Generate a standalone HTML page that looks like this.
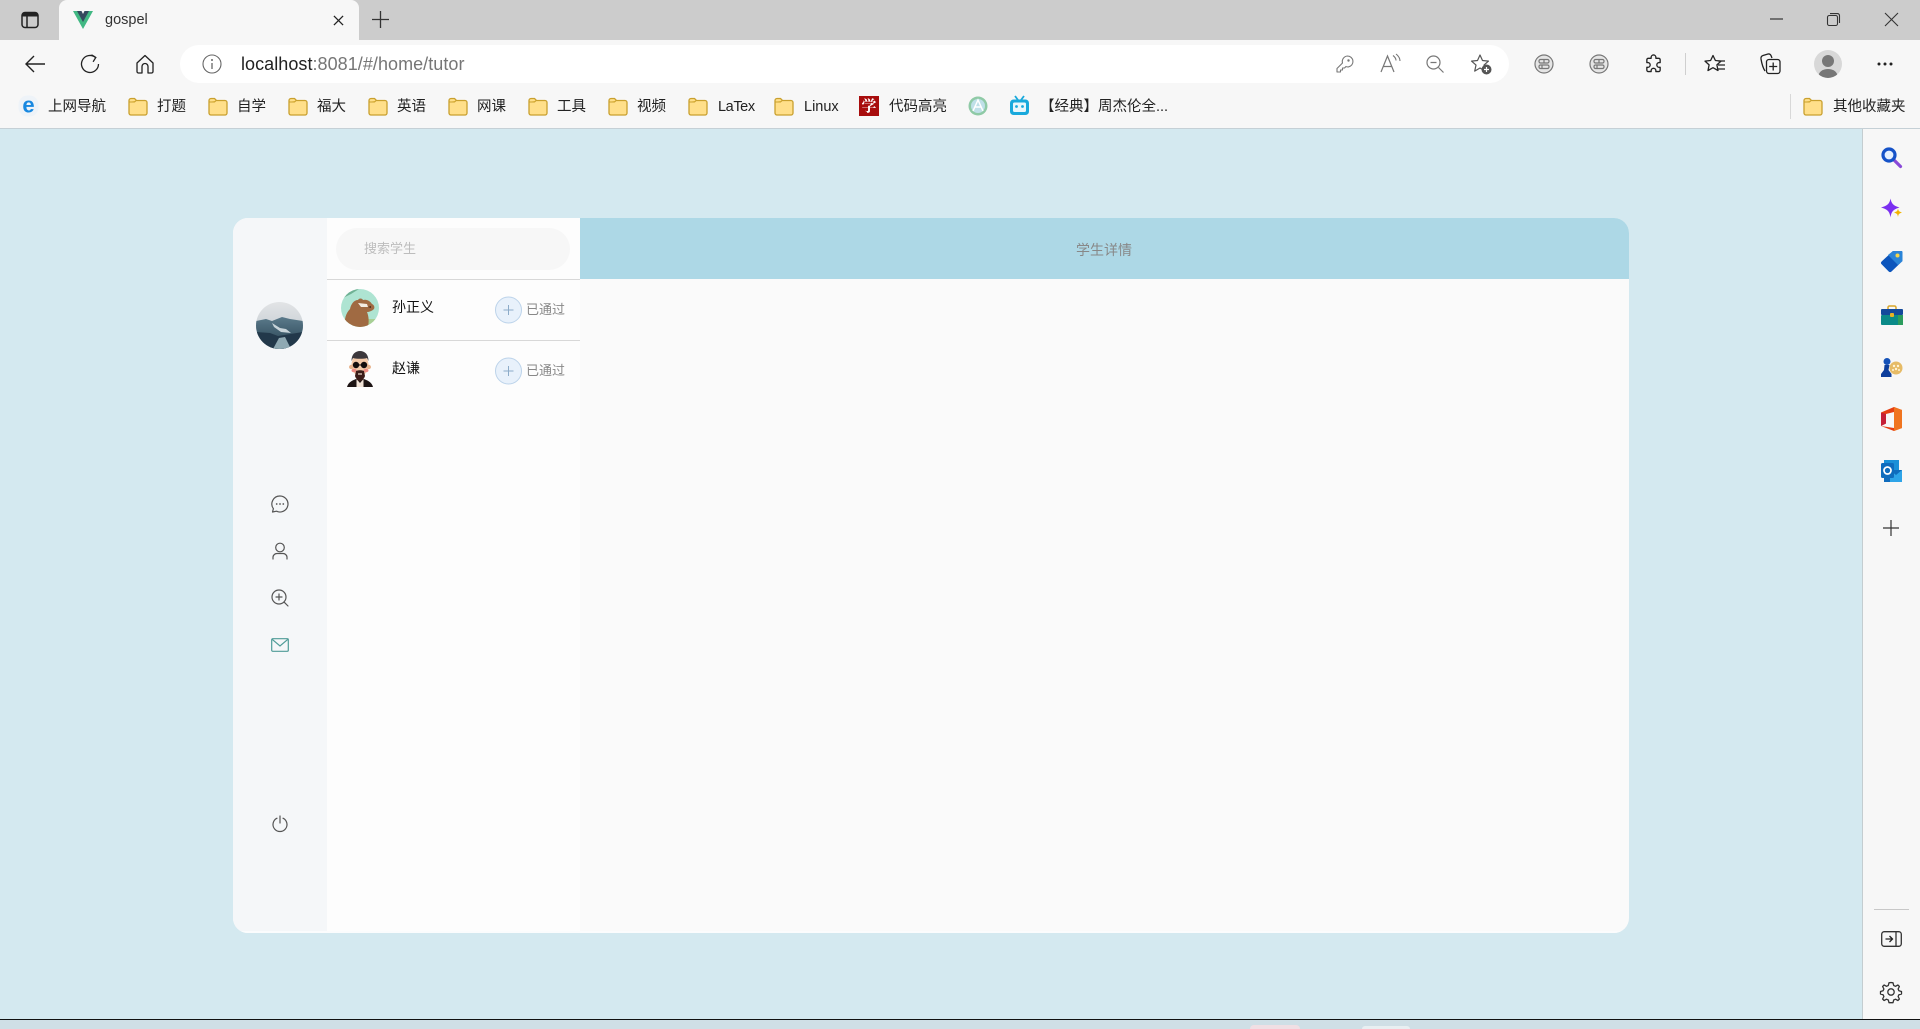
<!DOCTYPE html>
<html lang="zh">
<head>
<meta charset="utf-8">
<title>gospel</title>
<style>
html,body{margin:0;padding:0;width:1920px;height:1029px;overflow:hidden;background:#d4e9f0;font-family:"Liberation Sans","Noto Sans CJK SC",sans-serif}
div,span,svg{position:absolute;display:block}
svg{overflow:visible}
svg *{position:static}
.t{white-space:nowrap;transform:translateY(-50%);line-height:20px}
.bm{font-size:14.5px;color:#222;top:106.5px}
.ic{fill:none;stroke:#333;stroke-width:1.3;stroke-linecap:round;stroke-linejoin:round}
.nv{fill:none;stroke:#555;stroke-width:1.2;stroke-linecap:round;stroke-linejoin:round}
</style>
</head>
<body>
<svg width="0" height="0" style="left:0;top:0">
<defs>
<symbol id="folder" viewBox="0 0 20 20">
<path d="M1 4.500a2 2 0 0 1 2-2h3.500l2 2h8.500a2 2 0 0 1 2 2v10.500a2 2 0 0 1-2 2H3a2 2 0 0 1-2-2z" fill="#ffdf8a" stroke="#c9a02e" stroke-width="1.300"/>
<path d="M1.500 6h5l1.700-1.500" fill="#f3c84f" stroke="#c9a02e" stroke-width="1"/>
</symbol>
<symbol id="bt" viewBox="0 0 20 20">
<circle cx="10" cy="10" r="9" fill="#e5e5e5" stroke="#777" stroke-width="1.200"/>
<rect x="5" y="5.500" width="10" height="3.500" rx="1.500" fill="none" stroke="#777" stroke-width="1.200"/>
<rect x="5" y="11" width="10" height="3.500" rx="1.500" fill="none" stroke="#777" stroke-width="1.200"/>
<path d="M10 5.500v3.500M8 11v3.500" stroke="#777" stroke-width="1.200"/>
</symbol>
<symbol id="plus" viewBox="0 0 27 28">
<circle cx="13.500" cy="14" r="13" fill="#e8f1fb" stroke="#bcd3ea" stroke-width="1"/>
<path d="M13.500 9v10M8.500 14h10" stroke="#8cabc8" stroke-width="1" fill="none"/>
</symbol>
</defs>
</svg>

<!-- tab strip -->
<div style="left:0;top:0;width:1920px;height:40px;background:#cccccc"></div>
<svg style="left:21px;top:11px" width="18" height="18" viewBox="0 0 18 18"><rect x="1" y="1.500" width="16" height="15" rx="3" fill="none" stroke="#222" stroke-width="1.500"/><path d="M1 3.500a2 2 0 0 1 2-2h12a2 2 0 0 1 2 2v2H1z" fill="#222"/><path d="M6 5v11" stroke="#222" stroke-width="1.500"/></svg>
<div style="left:59px;top:0;width:300px;height:40px;background:#f7f7f7;border-radius:8px 8px 0 0"></div>
<svg style="left:73px;top:11px" width="20" height="18" viewBox="0 0 20 18"><path d="M0 0h5l5 9 5-9h5L10 18z" fill="#41b883"/><path d="M4 0h4.500L10 3l1.500-3H16L10 11z" fill="#35495e"/></svg>
<span class="t" style="left:105px;top:20px;font-size:14.500px;color:#333">gospel</span>
<svg style="left:333px;top:15px" width="11" height="11" viewBox="0 0 12 12"><path d="M1 1l10 10M11 1L1 11" stroke="#222" stroke-width="1.400" fill="none"/></svg>
<svg style="left:372px;top:11px" width="17" height="17" viewBox="0 0 17 17"><path d="M8.500 0v17M0 8.500h17" stroke="#333" stroke-width="1.300" fill="none"/></svg>
<svg style="left:1770px;top:18px" width="13" height="2" viewBox="0 0 13 2"><path d="M0 1h13" stroke="#333" stroke-width="1.200"/></svg>
<svg style="left:1827px;top:13px" width="13" height="13" viewBox="0 0 13 13"><rect x="0.500" y="2.500" width="10" height="10" rx="1.800" fill="none" stroke="#333" stroke-width="1.100"/><path d="M3 .6h7.500A2 2 0 0 1 12.500 2.600V10" fill="none" stroke="#333" stroke-width="1.100"/></svg>
<svg style="left:1885px;top:13px" width="13" height="13" viewBox="0 0 13 13"><path d="M0 0l13 13M13 0L0 13" stroke="#333" stroke-width="1.100" fill="none"/></svg>

<!-- toolbar -->
<div style="left:0;top:40px;width:1920px;height:88px;background:#f7f7f7"></div>
<div style="left:0;top:128px;width:1920px;height:1px;background:#c5d0d6"></div>
<svg style="left:24px;top:53px" width="22" height="22" viewBox="0 0 22 22"><path d="M21 11H2M10 3l-8 8 8 8" fill="none" stroke="#222" stroke-width="1.400"/></svg>
<svg style="left:80px;top:54px" width="20" height="20" viewBox="0 0 20 20"><path d="M15.500 3.500A8.500 8.500 0 1 0 18.500 10" fill="none" stroke="#222" stroke-width="1.300"/><path d="M11.500 0.800l4.300 2.700-2.700 4.300" fill="none" stroke="#222" stroke-width="1.300"/></svg>
<svg style="left:135px;top:54px" width="20" height="20" viewBox="0 0 20 20"><path d="M2 9l8-7.500L18 9v8.500a1.500 1.500 0 0 1-1.500 1.500H13V12.500a3 3 0 0 0-6 0V19H3.500A1.500 1.500 0 0 1 2 17.500z" fill="none" stroke="#222" stroke-width="1.300" stroke-linejoin="round"/></svg>
<div style="left:180px;top:45px;width:1329px;height:38px;background:#fff;border-radius:19px"></div>
<svg style="left:202px;top:54px" width="20" height="20" viewBox="0 0 20 20"><circle cx="10" cy="10" r="9" fill="none" stroke="#666" stroke-width="1.100"/><path d="M10 9v6" stroke="#666" stroke-width="1.300"/><circle cx="10" cy="6" r="1" fill="#666"/></svg>
<span class="t" style="left:241px;top:63.500px;font-size:18px;letter-spacing:.05px;color:#222">localhost<span style="position:static;display:inline;color:#767676">:8081/#/home/tutor</span></span>

<svg style="left:1336px;top:55px" width="18" height="18" viewBox="0 0 18 18"><path d="M11.500 1a5.500 5.500 0 0 1 1 10.900c-1 .1-2 0-2.500-.4L8.500 13H6.500v2H4.500v2H1v-3.500L6.500 8A5.500 5.500 0 0 1 11.500 1z" fill="none" stroke="#777" stroke-width="1.100" stroke-linejoin="round"/><circle cx="12.500" cy="5.500" r="1.200" fill="#777"/></svg>
<svg style="left:1380px;top:54px" width="21" height="19" viewBox="0 0 21 19"><path d="M1 18L7.500 2 14 18M3.500 12.500h8" fill="none" stroke="#777" stroke-width="1.200"/><path d="M13 1.500c2 1.500 3 3 3 5M16 0c2.500 2 4 4.500 4 7" fill="none" stroke="#777" stroke-width="1.100"/></svg>
<svg style="left:1426px;top:55px" width="18" height="18" viewBox="0 0 18 18"><circle cx="7.500" cy="7.500" r="6.500" fill="none" stroke="#777" stroke-width="1.200"/><path d="M12.500 12.500l5 5M4.500 7.500h6" stroke="#777" stroke-width="1.200" fill="none"/></svg>
<svg style="left:1470px;top:53px" width="22" height="22" viewBox="0 0 22 22"><path d="M10 2l2.500 5.500 6 .6-4.500 4 1.300 6-5.300-3.100-5.300 3.100 1.300-6-4.500-4 6-.6z" fill="none" stroke="#555" stroke-width="1.200" stroke-linejoin="round"/><circle cx="16.500" cy="16.500" r="5" fill="#555"/><path d="M16.500 14v5M14 16.500h5" stroke="#fff" stroke-width="1.200"/></svg>
<svg style="left:1534px;top:54px" width="20" height="20"><use href="#bt"/></svg>
<svg style="left:1589px;top:54px" width="20" height="20"><use href="#bt"/></svg>
<svg style="left:1644px;top:54px" width="20" height="20" viewBox="0 0 20 20"><path d="M7.500 4V3a2.500 2.500 0 0 1 5 0v1h3a1.500 1.500 0 0 1 1.500 1.500v3h-1a2.500 2.500 0 0 0 0 5h1v3a1.500 1.500 0 0 1-1.500 1.500h-3v-1a2.500 2.500 0 0 0-5 0v1h-3A1.500 1.500 0 0 1 3 16.500v-3h1a2.500 2.500 0 0 0 0-5H3v-3A1.500 1.500 0 0 1 4.500 4z" transform="translate(0 .5) scale(.95)" fill="none" stroke="#222" stroke-width="1.400" stroke-linejoin="round"/></svg>
<div style="left:1685px;top:53px;width:1px;height:22px;background:#cfcfcf"></div>
<svg style="left:1704px;top:54px" width="22" height="20" viewBox="0 0 22 20"><path d="M9 1.500l2.400 5 5.600.6-4.100 3.800 1.100 5.600L9 13.700 4 16.500l1.100-5.600L1 7.100l5.600-.6z" fill="none" stroke="#222" stroke-width="1.300" stroke-linejoin="round"/><path d="M14 7h7M14 11h7M14 15h7" stroke="#222" stroke-width="1.300"/></svg>
<svg style="left:1760px;top:53px" width="21" height="22" viewBox="0 0 21 22"><path d="M5 18C3 15 1.500 9 1 6c-.2-1.500.5-3 2-3.500L8 1c1.500-.3 2.500.5 3 1.500L12 5" fill="none" stroke="#222" stroke-width="1.300"/><rect x="6.500" y="6.500" width="13.500" height="14" rx="2.500" fill="none" stroke="#222" stroke-width="1.300"/><path d="M13.200 9.500v8M9.200 13.500h8" stroke="#222" stroke-width="1.300"/></svg>
<svg style="left:1814px;top:50px" width="28" height="28" viewBox="0 0 28 28"><defs><clipPath id="pc"><circle cx="14" cy="14" r="14"/></clipPath></defs><circle cx="14" cy="14" r="14" fill="#d8d8d8"/><g clip-path="url(#pc)"><circle cx="14" cy="11" r="6" fill="#777"/><ellipse cx="14" cy="26" rx="9.500" ry="7" fill="#777"/></g></svg>
<svg style="left:1877px;top:62px" width="16" height="4" viewBox="0 0 16 4"><circle cx="2" cy="2" r="1.500" fill="#222"/><circle cx="8" cy="2" r="1.500" fill="#222"/><circle cx="14" cy="2" r="1.500" fill="#222"/></svg>

<!-- bookmarks -->
<svg style="left:18px;top:95px" width="21" height="22" viewBox="0 0 21 22"><rect x=".5" y=".5" width="20" height="21" rx="9" fill="#eef3f8"/><text x="10.500" y="17.500" text-anchor="middle" font-family="Liberation Sans" font-weight="bold" font-size="22" fill="#1888e0">e</text></svg>
<span class="t bm" style="left:48px">上网导航</span>
<svg style="left:128px;top:96px" width="20" height="20"><use href="#folder"/></svg><span class="t bm" style="left:157px">打题</span>
<svg style="left:208px;top:96px" width="20" height="20"><use href="#folder"/></svg><span class="t bm" style="left:237px">自学</span>
<svg style="left:288px;top:96px" width="20" height="20"><use href="#folder"/></svg><span class="t bm" style="left:317px">福大</span>
<svg style="left:368px;top:96px" width="20" height="20"><use href="#folder"/></svg><span class="t bm" style="left:397px">英语</span>
<svg style="left:448px;top:96px" width="20" height="20"><use href="#folder"/></svg><span class="t bm" style="left:477px">网课</span>
<svg style="left:528px;top:96px" width="20" height="20"><use href="#folder"/></svg><span class="t bm" style="left:557px">工具</span>
<svg style="left:608px;top:96px" width="20" height="20"><use href="#folder"/></svg><span class="t bm" style="left:637px">视频</span>
<svg style="left:688px;top:96px" width="20" height="20"><use href="#folder"/></svg><span class="t bm" style="left:718px;letter-spacing:-.4px">LaTex</span>
<svg style="left:774px;top:96px" width="20" height="20"><use href="#folder"/></svg><span class="t bm" style="left:804px">Linux</span>
<div style="left:859px;top:96px;width:20px;height:20px;background:#a80d0d;color:#fff;font-size:15px;line-height:20px;text-align:center;font-family:'Noto Serif CJK SC',serif;font-weight:bold">学</div>
<span class="t bm" style="left:889px">代码高亮</span>
<svg style="left:968px;top:96px" width="20" height="20" viewBox="0 0 20 20"><circle cx="10" cy="10" r="9.500" fill="#8fcaa6"/><circle cx="10" cy="10" r="7" fill="#bfe0e8"/><path d="M5 15L10 4l5 11M7 11h6" fill="none" stroke="#fff" stroke-width="1.500"/></svg>
<svg style="left:1009px;top:95px" width="21" height="21" viewBox="0 0 21 21"><path d="M6 1l3 4M15 1l-3 4" stroke="#19a9dc" stroke-width="1.800" fill="none"/><rect x="1" y="4.500" width="19" height="15.500" rx="3.500" fill="#19a9dc"/><rect x="4" y="7.500" width="13" height="9.500" rx="1.500" fill="#e9f7fc"/><circle cx="7.500" cy="11.500" r="1.400" fill="#19a9dc"/><circle cx="13.500" cy="11.500" r="1.400" fill="#19a9dc"/></svg>
<span class="t bm" style="left:1040px">【经典】周杰伦全...</span>
<div style="left:1790px;top:94px;width:1px;height:25px;background:#d8d8d8"></div>
<svg style="left:1803px;top:96px" width="20" height="20"><use href="#folder"/></svg><span class="t bm" style="left:1833px">其他收藏夹</span>

<!-- side panel -->
<div style="left:1862px;top:129px;width:58px;height:890px;background:#f7f7f7;border-left:1px solid #c4cdd0;box-sizing:border-box"></div>
<svg style="left:1881px;top:147px" width="21" height="21" viewBox="0 0 21 21"><path d="M13 13l6.500 6.500" stroke="#8a4ad8" stroke-width="3.200" stroke-linecap="round"/><circle cx="8" cy="8" r="6" fill="#e5f0ff" stroke="#1552c8" stroke-width="3.200"/></svg>
<svg style="left:1881px;top:198px" width="22" height="23" viewBox="0 0 22 22"><path d="M9.500 0c1 5 2.500 7 9 9-6.500 2-8 4-9 10-1-6-2.500-8-9.500-10 7-2 8.500-4 9.500-9z" fill="#7a2ff0"/><path d="M17 10c.5 2.500 1 3 4 4-3 1-3.500 1.500-4 4.500-.5-3-1-3.500-4-4.500 3-1 3.500-1.500 4-4z" fill="#f4b400"/></svg>
<svg style="left:1881px;top:250px" width="22" height="22" viewBox="0 0 22 22"><path d="M12 1h8a1.500 1.500 0 0 1 1.500 1.500V11L10.500 21.500a2 2 0 0 1-2.800 0L.6 14.300a2 2 0 0 1 0-2.800z" fill="#0c55bc"/><path d="M12 1h8a1.500 1.500 0 0 1 1.500 1.500V11L17 15 7 5z" fill="#2a84d8"/><circle cx="16.500" cy="5.500" r="2" fill="#f5d54a"/></svg>
<svg style="left:1881px;top:305px" width="22" height="20" viewBox="0 0 22 20"><path d="M7 5V2.500A1.500 1.500 0 0 1 8.500 1h5A1.500 1.500 0 0 1 15 2.500V5" fill="none" stroke="#d9a62a" stroke-width="1.500"/><rect x="0" y="4" width="22" height="6" rx="1" fill="#134a9b"/><rect x="0" y="10" width="22" height="10" rx="1" fill="#0a8a88"/><rect x="17" y="10" width="5" height="10" fill="#2b9c5d"/><rect x="9" y="8" width="4" height="4" rx="1" fill="#e6b325"/></svg>
<svg style="left:1880px;top:357px" width="23" height="21" viewBox="0 0 23 21"><circle cx="7" cy="4.500" r="3.500" fill="#1552b8"/><path d="M4.500 8h5l-1 5 3 4v3H1v-3l3-4z" fill="#0d3e9c"/><circle cx="16" cy="11" r="6.500" fill="#e6bb66"/><g fill="#fff4d6"><circle cx="14" cy="9" r="1.200"/><circle cx="18" cy="9" r="1.200"/><circle cx="16" cy="12" r="1.200"/><circle cx="13" cy="13" r="1"/><circle cx="19" cy="13" r="1"/></g></svg>
<svg style="left:1881px;top:407px" width="21" height="24" viewBox="0 0 21 24"><path d="M0 5.500L13 0l8 3v18l-8 3L0 19l13 2V5l-8 2v9.500L0 19z" fill="#e63f12"/><path d="M13 0l8 3v18l-8 3z" fill="#f0741f"/><path d="M0 5.500L5 7v9.500L0 19z" fill="#c52038"/></svg>
<svg style="left:1881px;top:460px" width="21" height="22" viewBox="0 0 21 22"><rect x="3" y="0" width="15" height="12" fill="#1a90d8"/><rect x="3" y="10" width="18" height="12" fill="#0f6cbd"/><path d="M9 10l6 5 6-5v12H9z" fill="#2ea4e8"/><rect x="0" y="3" width="13" height="15" rx="1.500" fill="#0f6cbd"/><circle cx="6.500" cy="10.500" r="3.500" fill="none" stroke="#fff" stroke-width="1.700"/></svg>
<svg style="left:1883px;top:520px" width="16" height="16" viewBox="0 0 16 16"><path d="M8 0v16M0 8h16" stroke="#333" stroke-width="1.200" fill="none"/></svg>
<div style="left:1874px;top:909px;width:35px;height:1px;background:#c8c8c8"></div>
<svg style="left:1881px;top:931px" width="21" height="16" viewBox="0 0 21 16"><rect x=".7" y=".7" width="19.600" height="14.600" rx="2.500" fill="none" stroke="#333" stroke-width="1.300"/><path d="M15 .7v14.600" stroke="#333" stroke-width="1.300"/><path d="M4.500 8h7M8.500 5l3 3-3 3" fill="none" stroke="#222" stroke-width="1.300"/></svg>
<svg style="left:1879px;top:980px" width="24" height="24" viewBox="0 0 24 24"><path d="M12 2.500l2 .3.700 2.700 1.800.8 2.400-1.300 1.500 1.500-1.300 2.500.8 1.700 2.600.8v2.500l-2.600.8-.8 1.700 1.300 2.500-1.500 1.500-2.400-1.300-1.800.8-.7 2.700h-4l-.7-2.700-1.800-.8-2.400 1.300-1.500-1.500 1.300-2.500-.8-1.700-2.600-.8v-2.500l2.600-.8.800-1.700-1.300-2.500 1.500-1.500 2.400 1.300 1.800-.8.700-2.700z" fill="none" stroke="#333" stroke-width="1.300" stroke-linejoin="round"/><circle cx="12" cy="12" r="3.200" fill="none" stroke="#333" stroke-width="1.300"/></svg>

<!-- taskbar -->
<div style="left:0;top:1019px;width:1920px;height:1px;background:#111"></div>
<div style="left:0;top:1020px;width:1920px;height:9px;background:#cfdfe6"></div>
<div style="left:1250px;top:1025px;width:50px;height:4px;background:#f0dfe4;border-radius:4px 4px 0 0"></div>
<div style="left:1362px;top:1026px;width:48px;height:3px;background:#e8eff2;border-radius:4px 4px 0 0"></div>

<!-- app card -->
<div style="left:233px;top:218px;width:1396px;height:715px;border-radius:15px;overflow:hidden;background:#fafafa">
  <div style="left:0;top:0;width:94px;height:715px;background:#f5f7f9"></div>
  <div style="left:94px;top:0;width:253px;height:715px;background:#fdfdfd"></div>
  <div style="left:347px;top:0;width:1049px;height:61px;background:#add8e6"></div>
  <div style="left:94px;top:61px;width:253px;height:1px;background:#d8d8d8"></div>
  <div style="left:94px;top:122px;width:253px;height:1px;background:#d8d8d8"></div>
  <div style="left:103px;top:10px;width:234px;height:42px;background:#f7f7f7;border-radius:21px"></div>
  <div style="left:0;top:713px;width:1396px;height:2px;background:#fbfcfd"></div>
</div>
<span class="t" style="left:364px;top:249px;font-size:13px;color:#bdbdbd">搜索学生</span>
<span class="t" style="left:1076px;top:250px;font-size:14px;color:#888">学生详情</span>

<!-- profile avatar -->
<svg style="left:256px;top:302px" width="47" height="47" viewBox="0 0 47 47"><defs><clipPath id="a0"><circle cx="23.500" cy="23.500" r="23.500"/></clipPath><linearGradient id="sky" x1="0" y1="0" x2="0" y2="1"><stop offset="0" stop-color="#e2e4e6"/><stop offset="1" stop-color="#b8c2ca"/></linearGradient><linearGradient id="mt" x1="0" y1="0" x2="0" y2="1"><stop offset="0" stop-color="#5b7a8b"/><stop offset="1" stop-color="#25404f"/></linearGradient></defs><g clip-path="url(#a0)"><rect width="47" height="47" fill="url(#sky)"/><path d="M0 19l10-2 6 2 10-4 8 2 13 2v28H0z" fill="url(#mt)"/><path d="M16 21l8 5 6 1 5 4-10-1-7-5z" fill="#c8d4da"/><path d="M0 30l14 1 8 3 25-4v17H0z" fill="#22384a"/><path d="M17 47l6-11 6-1 6 12z" fill="#8fa9b3"/></g></svg>

<!-- nav icons -->
<svg style="left:271px;top:495px" width="18" height="18" viewBox="0 0 18 18"><path d="M9 1a8 8 0 1 1-3.500 15.200L1.500 17l.9-3.300A8 8 0 0 1 9 1z" class="nv"/><circle cx="5.700" cy="9" r=".9" fill="#555"/><circle cx="9" cy="9" r=".9" fill="#555"/><circle cx="12.300" cy="9" r=".9" fill="#555"/></svg>
<svg style="left:272px;top:542px" width="16" height="18" viewBox="0 0 16 18"><circle cx="8" cy="5.500" r="4.300" class="nv"/><path d="M1 17v-2a4 4 0 0 1 4-3.500h6a4 4 0 0 1 4 3.500v2" class="nv"/></svg>
<svg style="left:271px;top:589px" width="18" height="18" viewBox="0 0 18 18"><circle cx="8" cy="8" r="7" class="nv"/><path d="M5 8h6M8 5v6M13.200 13.200L17 17" class="nv"/></svg>
<svg style="left:271px;top:638px" width="18" height="14" viewBox="0 0 18 14"><rect x=".7" y=".7" width="16.600" height="12.600" rx="1" fill="none" stroke="#4f9c98" stroke-width="1.200"/><path d="M1 1.200L9 8l8-6.800" fill="none" stroke="#4f9c98" stroke-width="1.200"/></svg>
<svg style="left:272px;top:815px" width="16" height="17" viewBox="0 0 16 17"><path d="M5 3.200a7 7 0 1 0 6 0" class="nv"/><path d="M8 1v7" class="nv"/></svg>

<!-- bear avatar -->
<svg style="left:341px;top:289px" width="38" height="38" viewBox="0 0 38 38"><defs><clipPath id="a1"><circle cx="19" cy="19" r="19"/></clipPath></defs><g clip-path="url(#a1)"><rect width="38" height="38" fill="#aee4d2"/><path d="M0 0h18L10 5 0 10z" fill="#6fb194"/><path d="M0 30h38v8H0z" fill="#a8cf94"/><path d="M4 38c-1-8 1-14 5-18 1-5 4-9 8-9 1-2 4-2 5 0 4-1 7 1 9 4 2 1 3 3 2 5-2 2-5 3-7 3 2 5 2 10 1 15z" fill="#a06a42"/><path d="M17 14l9 1 1 3-7 0z" fill="#f3ece2"/><path d="M27 18l3-1 0 2z" fill="#4a2e1c"/></g></svg>
<!-- man avatar -->
<svg style="left:347px;top:351px" width="26" height="36" viewBox="0 0 26 36"><path d="M0 36c1-4 4-6 9-8h8c5 2 8 4 9 8z" fill="#1d1414"/><path d="M9.500 28l3.500 4 3.500-4v8h-7z" fill="#f2e4d8"/><ellipse cx="13" cy="14" rx="8.500" ry="11" fill="#f3c9a8"/><circle cx="4.200" cy="16" r="2.200" fill="#e8b48e"/><circle cx="21.800" cy="16" r="2.200" fill="#e8b48e"/><path d="M4.500 10C4.500 3 8.500 0 13 0s8.500 3 8.500 10l-1.500-3c-3 1-11 1-14 0z" fill="#3c383c"/><circle cx="9" cy="14" r="3.200" fill="#120d0d"/><circle cx="17" cy="14" r="3.200" fill="#120d0d"/><path d="M11 14h4" stroke="#120d0d" stroke-width="1"/><ellipse cx="7" cy="19.500" rx="2.500" ry="1.800" fill="#ee8c84"/><ellipse cx="19" cy="19.500" rx="2.500" ry="1.800" fill="#ee8c84"/><path d="M9 20c2-1 6-1 8 0l1 5c-1 3-3 5-5 5s-4-2-5-5z" fill="#3b1c18"/><path d="M11 23h4" stroke="#f3e0d0" stroke-width="1.200"/></svg>

<!-- list text -->
<span class="t" style="left:392px;top:307px;font-size:14px;color:#111">孙正义</span>
<span class="t" style="left:392px;top:368px;font-size:14px;color:#111">赵谦</span>
<svg style="left:495px;top:296px" width="27" height="28"><use href="#plus"/></svg>
<svg style="left:495px;top:357px" width="27" height="28"><use href="#plus"/></svg>
<span class="t" style="left:526px;top:310px;font-size:13px;color:#888">已通过</span>
<span class="t" style="left:526px;top:371px;font-size:13px;color:#888">已通过</span>
</body>
</html>
